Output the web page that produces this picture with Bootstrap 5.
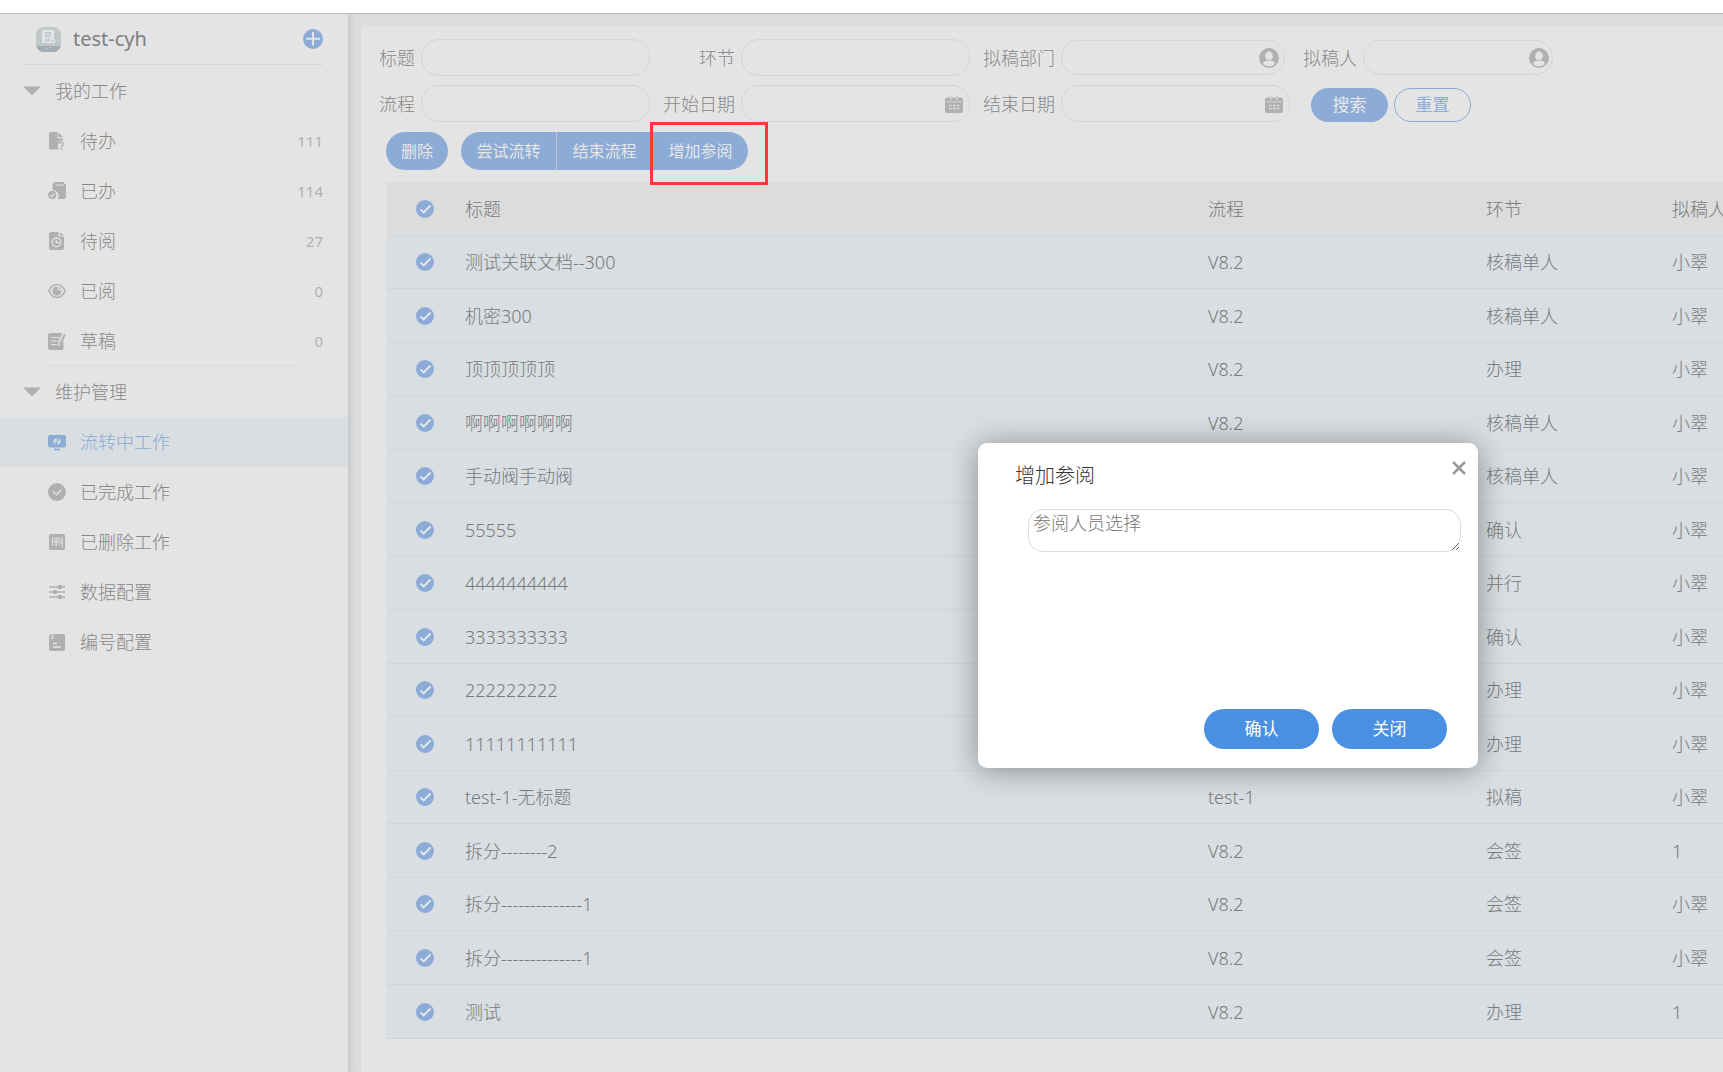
<!DOCTYPE html>
<html lang="zh-CN">
<head>
<meta charset="utf-8">
<meta name="viewport" content="width=device-width, initial-scale=1">
<title>流转中工作</title>
<link href="https://cdn.jsdelivr.net/npm/bootstrap@5.3.0/dist/css/bootstrap.min.css" rel="stylesheet">
<style>
:root{--pane:#e4e4e4;--gutter:#dcdcdc;--soft-blue:#8cacd7;--blue:#4990e2;--line:#d4d4d4;--icon:#b0b0b0}
body{font-family:"Noto Sans","Noto Sans CJK SC",sans-serif;font-size:18px;font-weight:300;line-height:24px;color:#888;background:var(--gutter);overflow:hidden}
.topline{height:14px;background:#fff;border-bottom:1px solid #bbb}
.side-pane{width:348px;background:var(--pane);box-shadow:0 0 8px rgba(0,0,0,.18);z-index:1}
.side-head{height:51px;margin:0 25px 0 23px;padding-left:13px;border-bottom:1px solid #d6d6d6;font-size:20px;color:#7f7f7f;font-weight:400}
.side-head .app-name{margin-left:12px}
.side-row{height:50px;color:inherit;text-decoration:none;padding:0 25px 0 48px}
.side-row svg{width:18px;height:18px;margin-right:14px;color:var(--icon);flex:none}
.side-row .tally{font-size:15px;font-weight:400;color:#b0b0b0}
.side-row.current{background:#d8dee2;color:var(--soft-blue)}
.side-row.current svg{color:var(--soft-blue)}
.side-group{height:51px;padding-left:23px;background:none;border:0;color:inherit;font-weight:300;text-align:left}
.side-group svg{margin-right:14px}
.side-rule{height:1px;margin:-1px 50px 0 48px;background:#dadada}
.work-pane{margin:12px 0 0 13px;padding:13px 0 0 14px;background:var(--pane);border-radius:5px 0 0 0;min-width:0}
.form-line{height:37px}
.form-line + .form-line{margin-top:9px}
.fld{width:320px;gap:6px;position:relative;flex:none}
.fld.first{width:275px}
.fld.person{width:263px}
.pill{width:229px;height:37px;border:1px solid var(--line);border-radius:18px;background:transparent;padding:0 36px 0 14px;color:#777;outline:0;flex:none}
.pill.dept{width:224px;height:35px;margin-right:5px}
.pill.who{width:190px;height:35px}
.fld svg{position:absolute;right:4px;color:var(--icon)}
.fld svg.inner{right:11px}
.fld svg.cal{right:7px;margin-top:1px}
.form-btns{padding-left:21px;gap:6px}
.btn-pill{width:77px;height:34px;padding:0;border-radius:17px;font-size:17px;line-height:20px;border:1px solid var(--soft-blue);color:var(--soft-blue)}
.btn-pill.full{background:var(--soft-blue);color:#e8e8e8}
.tool-line{margin:10px 0 12px 11px;gap:13px}
.btn-tool{height:38px;padding:0;font-size:16px;line-height:20px;background:var(--soft-blue);color:#e6e6e6;border:0;border-radius:19px;width:62px}
.tool-set .btn-tool{width:96px;border-radius:0}
.tool-set .btn-tool:first-child{border-radius:19px 0 0 19px}
.tool-set .btn-tool.final{border-radius:0 19px 19px 0;width:95px}
.tool-set .btn-tool:not(.final){border-right:1px solid #c3c8cf}
.ring{position:absolute;top:-10px;right:-20px;width:118px;height:63px;border:3px solid #fd3838;pointer-events:none;z-index:2}
.grid-box{padding-left:11px}
.work-grid{table-layout:fixed;width:100%;margin:0;border-collapse:separate;border-spacing:0;color:#7a7a7a}
.col-tick{width:71px}
.col-flow{width:278px}
.col-step{width:186px}
.col-author{width:59px}
.work-grid th,.work-grid td{padding:0 8px;height:53px;border-bottom:1px solid #d1d6d8;background:#d8dee2;font-weight:300;white-space:nowrap;vertical-align:middle}
.work-grid th{background:#dcdcdc;height:54px;border-bottom-color:#d3d5d6}
.work-grid tbody tr:nth-child(even) td,.work-grid tbody tr:last-child td{height:54px}
.tick{appearance:none;display:block;width:18px;height:18px;border-radius:50%;margin:0 0 0 22px;background:var(--soft-blue) url("data:image/svg+xml,%3Csvg xmlns='http://www.w3.org/2000/svg' viewBox='0 0 18 18'%3E%3Cpath d='M4.500 9.500l3.200 3 6.800-7' fill='none' stroke='%23e6e9ec' stroke-width='1.8'/%3E%3C/svg%3E") center/18px}
.dialog-box{position:absolute;left:978px;top:443px;width:500px;height:325px;background:#fff;border-radius:9px;box-shadow:0 2px 30px rgba(0,0,0,.38);padding:21px 18px 19px 37px;z-index:5;color:#333}
.dialog-box h2{font-size:20px;line-height:24px;font-weight:300;margin:0}
.dialog-box .shut{position:absolute;right:11px;top:17px;width:16px;height:16px;padding:0;border:0;background:none;display:flex}
.dialog-box textarea{display:block;width:433px;height:43px;margin:21px 0 0 13px;border:1px solid #dcdcdc;border-radius:15px;padding:0 4px;font-size:18px;line-height:24px;font-family:"Noto Sans CJK SC",sans-serif;font-weight:300;outline:0}
.dialog-box textarea::placeholder{color:#757575}
.btn-act{width:115px;height:40px;border:0;border-radius:20px;background:var(--blue);color:#fff;font-size:17px;line-height:20px;padding:0}
.acts{gap:13px;margin-right:13px}
</style>
<script src="https://cdn.jsdelivr.net/npm/bootstrap@5.3.0/dist/js/bootstrap.bundle.min.js"></script>
</head>
<body class="vh-100 d-flex flex-column">
<div class="topline flex-shrink-0"></div>
<div class="d-flex flex-grow-1 overflow-hidden">
<nav class="side-pane position-relative flex-shrink-0">
  <div class="side-head d-flex align-items-center">
    <svg width="25" height="25" viewBox="0 0 25 25"><defs><clipPath id="logo"><rect width="25" height="25" rx="8"/></clipPath></defs><g clip-path="url(#logo)"><path d="M0 0h25v25H0z" fill="#c1c7c9"/><path d="M0 19h25v6H0z" fill="#a3abb1"/><rect x="6" y="3" width="12" height="13" rx="1" fill="#e2e4e5"/><path d="M8.500 5.500h6v2h-5v2h5M8.500 12h5v2h-5" fill="none" stroke="#b9c0c3"/><circle cx="16.500" cy="14" r="2.800" fill="#dfe2e3"/><circle cx="16.500" cy="14" r="1" fill="#c1c7c9"/><path d="M9 20.500v3M10 22h2M13 20.500h2v3" stroke="#b9c0c5" fill="none"/></g></svg>
    <span class="app-name flex-grow-1">test-cyh</span>
    <button class="btn p-0 border-0 d-flex" aria-label="新建"><svg width="20" height="20" viewBox="0 0 20 20"><circle cx="10" cy="10" r="10" fill="#8cacd7"/><path d="M10 3v13.500M3.200 9.800h13.600" stroke="#e4e4e4" stroke-width="2"/></svg></button>
  </div>
  <button class="side-group w-100 d-flex align-items-center"><svg width="18" height="10" viewBox="0 0 18 10"><path d="M0 .500h18L9 9.500z" fill="#b0b0b0"/></svg>我的工作</button>
  <a href="#" class="side-row d-flex align-items-center"><svg viewBox="0 0 18 18"><path fill="currentColor" d="M3 0h6.500v6.500H15v2.200c-3-.8-5 1-5 3.500v5.300H3a2 2 0 0 1-2-2V2a2 2 0 0 1 2-2z"/><path fill="currentColor" d="M10.500.300l4.500 5h-4.500z"/><path d="M11.200 12a2 2 0 1 1 3.200 1.600c-.8.600-1 .8-1 1.700" fill="none" stroke="currentColor" stroke-width="1.500"/><circle cx="13.400" cy="17" r="1" fill="currentColor"/></svg><span class="flex-grow-1">待办</span><span class="tally">111</span></a>
  <a href="#" class="side-row d-flex align-items-center"><svg viewBox="0 0 18 18"><path fill="currentColor" d="M8 0h7l3 3v11a3 3 0 0 1-3 3h-5.500a5.500 5.500 0 0 0-5-8.800V3.500A3.500 3.500 0 0 1 8 0z"/><path d="M8 3h8" stroke="#e4e4e4"/><circle cx="4.200" cy="13" r="4.200" fill="currentColor"/><path d="M2 13l1.700 1.600L6.500 11.500" fill="none" stroke="#e4e4e4" stroke-width="1.300"/></svg><span class="flex-grow-1">已办</span><span class="tally">114</span></a>
  <a href="#" class="side-row d-flex align-items-center"><svg viewBox="0 0 18 18"><path fill="currentColor" d="M3 0h7.500v4.500H16V16a2 2 0 0 1-2 2H3a2 2 0 0 1-2-2V2a2 2 0 0 1 2-2zM11.800.200L16 3.500h-4.200z"/><circle cx="8.500" cy="10.300" r="4.300" fill="none" stroke="#e4e4e4" stroke-width="1.300"/><path d="M8.300 7.800v2.700h3" fill="none" stroke="#e4e4e4" stroke-width="1.300"/></svg><span class="flex-grow-1">待阅</span><span class="tally">27</span></a>
  <a href="#" class="side-row d-flex align-items-center"><svg viewBox="0 0 18 18"><path d="M1 9c1.700-4.300 4.700-6.500 8-6.500S15.300 4.700 17 9c-1.700 4.300-4.700 6.500-8 6.500S2.700 13.300 1 9z" fill="none" stroke="currentColor" stroke-width="1.600"/><circle cx="9" cy="9" r="4.600" fill="currentColor"/><path d="M10 4v3.500h4" fill="none" stroke="#e4e4e4" stroke-width="1.300"/></svg><span class="flex-grow-1">已阅</span><span class="tally">0</span></a>
  <a href="#" class="side-row d-flex align-items-center"><svg viewBox="0 0 18 18"><path fill="currentColor" d="M2 1h12.500L10 9.500 10 14l3-1 2.500-5V16a2 2 0 0 1-2 2H2a2 2 0 0 1-2-2V3a2 2 0 0 1 2-2z"/><path d="M3 5.500h8M3 9h6M3 12.700h6" stroke="#e4e4e4" stroke-width="1.200"/><path d="M17 2.500L11.500 13" stroke="currentColor" stroke-width="2"/></svg><span class="flex-grow-1">草稿</span><span class="tally">0</span></a>
  <div class="side-rule"></div>
  <button class="side-group w-100 d-flex align-items-center"><svg width="18" height="10" viewBox="0 0 18 10"><path d="M0 .500h18L9 9.500z" fill="#b0b0b0"/></svg>维护管理</button>
  <a href="#" class="side-row current d-flex align-items-center"><svg viewBox="0 0 18 18"><rect y="2" width="18" height="12.500" rx="2" fill="currentColor"/><path d="M6 16.500h6" stroke="currentColor" stroke-width="1.800"/><path d="M8 5.500a3 3 0 0 0-.5 5.500M10 11a3 3 0 0 0 .5-5.500M8 5v3H6M10 11.500V8.500h2" fill="none" stroke="#d8dee2" stroke-width="1.300"/></svg>流转中工作</a>
  <a href="#" class="side-row d-flex align-items-center"><svg viewBox="0 0 18 18"><circle cx="9" cy="9" r="9" fill="currentColor"/><path d="M5 8.500L8.500 11.700 13 7" fill="none" stroke="#e4e4e4" stroke-width="1.500"/></svg>已完成工作</a>
  <a href="#" class="side-row d-flex align-items-center"><svg viewBox="0 0 18 18"><rect x="1" y="1" width="16" height="16" rx="2" fill="currentColor"/><path d="M4.500 13V5H7v8M8.500 13V5H11v8M3.500 8.500h8.500M13 5v6M14.500 4v9.500H13" fill="none" stroke="#dcdcdc" stroke-width="1"/></svg>已删除工作</a>
  <a href="#" class="side-row d-flex align-items-center"><svg viewBox="0 0 18 18"><path d="M1 4h16M1 9h16M1 14h16" stroke="currentColor" stroke-width="1.600"/><g fill="currentColor"><circle cx="12" cy="4" r="2.300"/><circle cx="7" cy="9" r="2.300"/><circle cx="12" cy="14" r="2.300"/></g></svg>数据配置</a>
  <a href="#" class="side-row d-flex align-items-center"><svg viewBox="0 0 18 18"><path fill="currentColor" d="M1 3l2-2v5h2.500V1H15a2 2 0 0 1 2 2v13a2 2 0 0 1-2 2H3a2 2 0 0 1-2-2z"/><path d="M4 1v4" stroke="currentColor" stroke-width="1"/><path d="M5 10.500h4M5 14h8" stroke="#e4e4e4" stroke-width="1.500"/></svg>编号配置</a>
</nav>

<main class="work-pane flex-grow-1 overflow-hidden">
  <form>
    <div class="form-line d-flex align-items-center">
      <div class="fld first d-flex align-items-center justify-content-end"><label for="f1">标题</label><input id="f1" class="pill"></div>
      <div class="fld d-flex align-items-center justify-content-end"><label for="f2">环节</label><input id="f2" class="pill"></div>
      <div class="fld d-flex align-items-center justify-content-end"><label for="f3">拟稿部门</label><input id="f3" class="pill dept"><svg class="inner" width="20" height="20" viewBox="0 0 20 20"><circle cx="10" cy="10" r="10" fill="currentColor"/><ellipse cx="10" cy="8" rx="3.800" ry="4.500" fill="#e4e4e4"/><path d="M4 16c.5-2.800 3-4 6-4s5.500 1.200 6 4c-3.500 3-8.500 3-12 0z" fill="#e4e4e4"/><path d="M6.500 12.300h7" stroke="#b0b0b0" stroke-width=".8"/></svg></div>
      <div class="fld person d-flex align-items-center justify-content-end"><label for="f4">拟稿人</label><input id="f4" class="pill who"><svg width="20" height="20" viewBox="0 0 20 20"><circle cx="10" cy="10" r="10" fill="currentColor"/><ellipse cx="10" cy="8" rx="3.800" ry="4.500" fill="#e4e4e4"/><path d="M4 16c.5-2.800 3-4 6-4s5.500 1.200 6 4c-3.500 3-8.500 3-12 0z" fill="#e4e4e4"/><path d="M6.500 12.300h7" stroke="#b0b0b0" stroke-width=".8"/></svg></div>
    </div>
    <div class="form-line d-flex align-items-center">
      <div class="fld first d-flex align-items-center justify-content-end"><label for="f5">流程</label><input id="f5" class="pill"></div>
      <div class="fld d-flex align-items-center justify-content-end"><label for="f6">开始日期</label><input id="f6" class="pill"><svg class="cal" width="18" height="17" viewBox="0 0 18 17"><path d="M2 1.500h14a2 2 0 0 1 2 2V15a2 2 0 0 1-2 2H2a2 2 0 0 1-2-2V3.500a2 2 0 0 1 2-2z" fill="currentColor"/><path d="M6 0v4M12 0v4" stroke="#cfcfcf" stroke-width="1.500"/><path d="M1 5.800h16" stroke="#d6d6d6"/><path d="M4 9.500h2.500M8 9.500h2.500M11.800 9.500h2.500M4 12.500h2.500M8 12.500h2.500M11.800 12.500h2.500" stroke="#dcdcdc" stroke-width="1.500"/></svg></div>
      <div class="fld d-flex align-items-center justify-content-end"><label for="f7">结束日期</label><input id="f7" class="pill"><svg class="cal" width="18" height="17" viewBox="0 0 18 17"><path d="M2 1.500h14a2 2 0 0 1 2 2V15a2 2 0 0 1-2 2H2a2 2 0 0 1-2-2V3.500a2 2 0 0 1 2-2z" fill="currentColor"/><path d="M6 0v4M12 0v4" stroke="#cfcfcf" stroke-width="1.500"/><path d="M1 5.800h16" stroke="#d6d6d6"/><path d="M4 9.500h2.500M8 9.500h2.500M11.800 9.500h2.500M4 12.500h2.500M8 12.500h2.500M11.800 12.500h2.500" stroke="#dcdcdc" stroke-width="1.500"/></svg></div>
      <div class="form-btns d-flex align-self-end"><button type="button" class="btn btn-pill full">搜索</button><button type="reset" class="btn btn-pill">重置</button></div>
    </div>
  </form>
  <div class="tool-line d-flex">
    <button class="btn btn-tool">删除</button>
    <div class="tool-set d-flex position-relative">
      <button class="btn btn-tool">尝试流转</button><button class="btn btn-tool">结束流程</button><button class="btn btn-tool final">增加参阅</button>
      <span class="ring"></span>
    </div>
  </div>
  <div class="grid-box">
  <table class="work-grid">
    <colgroup><col class="col-tick"><col><col class="col-flow"><col class="col-step"><col class="col-author"></colgroup>
    <thead><tr><th><input type="checkbox" class="tick" checked aria-label="全选"></th><th>标题</th><th>流程</th><th>环节</th><th>拟稿人</th></tr></thead>
    <tbody>
    <tr><td><input type="checkbox" class="tick" checked aria-label="选择"></td><td>测试关联文档--300</td><td>V8.2</td><td>核稿单人</td><td>小翠</td></tr>
    <tr><td><input type="checkbox" class="tick" checked aria-label="选择"></td><td>机密300</td><td>V8.2</td><td>核稿单人</td><td>小翠</td></tr>
    <tr><td><input type="checkbox" class="tick" checked aria-label="选择"></td><td>顶顶顶顶顶</td><td>V8.2</td><td>办理</td><td>小翠</td></tr>
    <tr><td><input type="checkbox" class="tick" checked aria-label="选择"></td><td>啊啊啊啊啊啊</td><td>V8.2</td><td>核稿单人</td><td>小翠</td></tr>
    <tr><td><input type="checkbox" class="tick" checked aria-label="选择"></td><td>手动阀手动阀</td><td></td><td>核稿单人</td><td>小翠</td></tr>
    <tr><td><input type="checkbox" class="tick" checked aria-label="选择"></td><td>55555</td><td></td><td>确认</td><td>小翠</td></tr>
    <tr><td><input type="checkbox" class="tick" checked aria-label="选择"></td><td>4444444444</td><td></td><td>并行</td><td>小翠</td></tr>
    <tr><td><input type="checkbox" class="tick" checked aria-label="选择"></td><td>3333333333</td><td></td><td>确认</td><td>小翠</td></tr>
    <tr><td><input type="checkbox" class="tick" checked aria-label="选择"></td><td>222222222</td><td></td><td>办理</td><td>小翠</td></tr>
    <tr><td><input type="checkbox" class="tick" checked aria-label="选择"></td><td>11111111111</td><td></td><td>办理</td><td>小翠</td></tr>
    <tr><td><input type="checkbox" class="tick" checked aria-label="选择"></td><td>test-1-无标题</td><td>test-1</td><td>拟稿</td><td>小翠</td></tr>
    <tr><td><input type="checkbox" class="tick" checked aria-label="选择"></td><td>拆分--------2</td><td>V8.2</td><td>会签</td><td>1</td></tr>
    <tr><td><input type="checkbox" class="tick" checked aria-label="选择"></td><td>拆分--------------1</td><td>V8.2</td><td>会签</td><td>小翠</td></tr>
    <tr><td><input type="checkbox" class="tick" checked aria-label="选择"></td><td>拆分--------------1</td><td>V8.2</td><td>会签</td><td>小翠</td></tr>
    <tr><td><input type="checkbox" class="tick" checked aria-label="选择"></td><td>测试</td><td>V8.2</td><td>办理</td><td>1</td></tr>
    </tbody>
  </table>
  </div>
</main>
</div>

<section class="dialog-box d-flex flex-column" role="dialog" aria-label="增加参阅">
  <h2>增加参阅</h2>
  <button class="shut" aria-label="关闭"><svg width="16" height="16" viewBox="0 0 16 16"><path d="M2 2l12 12M14 2L2 14" stroke="#9a9a9a" stroke-width="2.600"/></svg></button>
  <textarea placeholder="参阅人员选择" aria-label="参阅人员选择"></textarea>
  <div class="acts d-flex justify-content-end mt-auto"><button class="btn btn-act">确认</button><button class="btn btn-act">关闭</button></div>
</section>
</body>
</html>
